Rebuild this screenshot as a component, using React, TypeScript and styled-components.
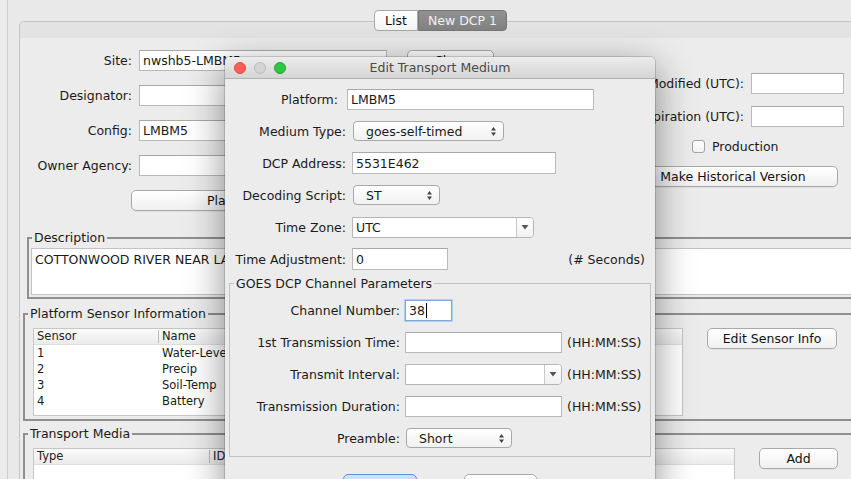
import React from 'react';
import styled, { createGlobalStyle } from 'styled-components';

const Global = createGlobalStyle`
  html, body { margin: 0; padding: 0; }
  body {
    background: #ececec;
    font-family: "DejaVu Sans", "Liberation Sans", sans-serif;
    font-size: 12.5px;
    color: #1a1a1a;
    overflow: hidden;
  }
  * { box-sizing: border-box; }
`;

const Screen = styled.div`
  position: relative;
  width: 851px;
  height: 479px;
  overflow: hidden;
  background: #ebebeb;
`;

const Frame = styled.div`
  margin-left: 7px;
  border-left: 1px solid #cdcdcd;
  height: 100%;
  padding: 10px 0 0 11px;
  background: #e9e9e9;
`;

const TabRow = styled.div`
  position: relative;
  z-index: 1;
  display: flex;
  height: 21px;
  margin-bottom: -10px;
  padding-left: 355px;
`;

const Tab = styled.div<{ $active?: boolean; $w: number }>`
  width: ${p => p.$w}px;
  height: 21px;
  display: flex;
  align-items: center;
  justify-content: center;
  border: 1px solid ${p => (p.$active ? '#777' : '#a8a8a8')};
  border-radius: ${p => (p.$active ? '0 4px 4px 0' : '4px 0 0 4px')};
  background: ${p => (p.$active ? 'linear-gradient(#919191, #828282)' : 'linear-gradient(#ffffff, #f4f4f4)')};
  color: ${p => (p.$active ? '#f2f2f2' : '#111')};
`;

const Pane = styled.div`
  width: 900px;
  height: 500px;
  border: 1px solid #c4c4c4;
  border-right: none;
  border-radius: 5px 0 0 0;
  overflow: hidden;
`;

const PaneHead = styled.div`
  height: 16px;
  background: #e3e3e3;
`;

const PaneBody = styled.div`
  background: #ececec;
  height: 100%;
  padding-top: 11px;
`;

const Upper = styled.div`
  display: flex;
`;

const LeftCol = styled.div`
  width: 524px;
  display: flex;
  flex-direction: column;
  gap: 13px;
`;

const RightCol = styled.div`
  width: 300px;
  padding-top: 23px;
  display: flex;
  flex-direction: column;
  align-items: flex-end;
`;

const Row = styled.div<{ $h?: number }>`
  display: flex;
  align-items: center;
  height: ${p => p.$h ?? 22}px;
  flex: none;
`;

const Label = styled.span<{ $w?: number; $gap?: number }>`
  flex: none;
  ${p => (p.$w ? `width: ${p.$w}px;` : '')}
  margin-right: ${p => p.$gap ?? 7}px;
  text-align: right;
  white-space: nowrap;
`;

const Field = styled.div<{ $w: number; $h?: number; $focus?: boolean }>`
  flex: none;
  width: ${p => p.$w}px;
  height: ${p => p.$h ?? 21}px;
  background: #fff;
  border: 1px solid ${p => (p.$focus ? '#7fa9dd' : '#b9b9b9')};
  border-top-color: ${p => (p.$focus ? '#7fa9dd' : '#a9a9a9')};
  box-shadow: ${p => (p.$focus ? '0 0 0 1px rgba(120,170,230,0.45)' : 'none')};
  padding: 0 3px;
  display: flex;
  align-items: center;
  white-space: nowrap;
  overflow: hidden;
`;

const Caret = styled.span`
  display: inline-block;
  width: 1px;
  height: 15px;
  background: #000;
  margin-left: 1px;
`;

const PushButton = styled.div<{ $w: number; $ml?: number; $mt?: number }>`
  flex: none;
  width: ${p => p.$w}px;
  height: 21px;
  margin-left: ${p => p.$ml ?? 0}px;
  margin-top: ${p => p.$mt ?? 0}px;
  border: 1px solid #a9a9a9;
  border-radius: 5px;
  background: linear-gradient(#ffffff, #f0f0f0);
  box-shadow: 0 1px 0 rgba(0, 0, 0, 0.04);
  display: flex;
  align-items: center;
  justify-content: center;
  white-space: nowrap;
  overflow: hidden;
  color: #111;
`;

const DefaultButton = styled(PushButton)`
  border-color: #5b8fd8;
  background: linear-gradient(#cfe3fb, #a9ccf7);
`;

const CheckRow = styled.div`
  align-self: flex-start;
  margin-left: 148px;
  margin-top: 12px;
  height: 14px;
  display: flex;
  align-items: center;
  gap: 7px;
`;

const CheckBox = styled.span`
  width: 13px;
  height: 13px;
  border: 1px solid #a3a3a3;
  border-radius: 3px;
  background: linear-gradient(#ffffff, #f3f3f3);
`;

const Group = styled.div<{ $ml: number; $mt: number; $pb: number }>`
  width: 880px;
  margin-left: ${p => p.$ml}px;
  margin-top: ${p => p.$mt}px;
  padding-bottom: ${p => p.$pb}px;
  border: 2px solid #8f8f8f;
  border-right: none;
`;

const Legend = styled.div<{ $ml: number }>`
  width: fit-content;
  height: 15px;
  line-height: 15px;
  margin: -9px 0 0 ${p => p.$ml}px;
  padding: 0 2px;
  background: #ececec;
  white-space: nowrap;
`;

const TextArea = styled.div`
  margin: 3px 0 0 2px;
  height: 47px;
  background: #fff;
  border: 1px solid #c3c3c3;
  padding: 3px 3px;
  line-height: 15px;
  white-space: nowrap;
`;

const GroupInner = styled.div`
  display: flex;
  align-items: flex-start;
  margin-top: 7px;
`;

const Table = styled.div<{ $w: number; $h: number }>`
  flex: none;
  margin-left: 8px;
  width: ${p => p.$w}px;
  height: ${p => p.$h}px;
  background: #fff;
  border: 1px solid #c6c6c6;
  font-size: 11.5px;
  overflow: hidden;
`;

const THead = styled.div<{ $cols: string }>`
  display: grid;
  grid-template-columns: ${p => p.$cols};
  height: 16px;
  background: linear-gradient(#fbfbfb, #ebebeb);
  border-bottom: 1px solid #dedede;
`;

const TH = styled.div<{ $sep?: boolean }>`
  padding-left: 3px;
  border-right: ${p => (p.$sep ? '1px solid #bcbcbc' : 'none')};
  margin: ${p => (p.$sep ? '1px 0' : '0')};
  line-height: ${p => (p.$sep ? '13px' : '15px')};
  color: #222;
`;

const TRow = styled.div<{ $cols: string }>`
  display: grid;
  grid-template-columns: ${p => p.$cols};
  height: 16px;
  line-height: 16px;
`;

const TD = styled.div`
  padding-left: 3px;
  white-space: nowrap;
  overflow: hidden;
`;

/* ---------- dialog ---------- */

const Dialog = styled.div`
  position: absolute;
  left: 225px;
  top: 57px;
  width: 430px;
  height: 450px;
  background: #ececec;
  border-radius: 5px 5px 0 0;
  box-shadow: 0 10px 38px rgba(0, 0, 0, 0.45), 0 0 0 1px rgba(0, 0, 0, 0.14);
  z-index: 5;
`;

const TitleBar = styled.div`
  height: 22px;
  display: grid;
  grid-template-columns: 1fr auto 1fr;
  align-items: center;
  border-radius: 5px 5px 0 0;
  background: linear-gradient(#ececec, #d5d5d5);
  border-bottom: 1px solid #b1b1b1;
`;

const Lights = styled.div`
  display: flex;
  gap: 8px;
  padding-left: 9px;
`;

const Light = styled.span<{ $c: string; $b: string }>`
  width: 12px;
  height: 12px;
  border-radius: 50%;
  background: ${p => p.$c};
  border: 1px solid ${p => p.$b};
`;

const Title = styled.div`
  color: #4a4a4a;
  white-space: nowrap;
`;

const DialogBody = styled.div`
  padding-top: 9px;
  display: flex;
  flex-direction: column;
`;

const Rows = styled.div`
  display: flex;
  flex-direction: column;
  gap: 10px;
`;

const Note = styled.span<{ $ml?: number; $mr?: number }>`
  margin-left: ${p => p.$ml ?? 5}px;
  margin-right: ${p => p.$mr ?? 0}px;
  white-space: nowrap;
`;

const Spacer = styled.span`
  flex: 1;
`;

const InnerGroup = styled.div`
  margin: 13px 4px 0 4px;
  border: 1px solid #c2c2c2;
  padding-bottom: 7px;
`;

const InnerLegend = styled.div`
  width: fit-content;
  height: 15px;
  line-height: 15px;
  margin: -8px 0 0 4px;
  padding: 0 2px;
  background: #ececec;
  white-space: nowrap;
`;

const InnerRows = styled(Rows)`
  padding-top: 8px;
`;

const Popup = styled.div<{ $w: number; $ml?: number }>`
  flex: none;
  width: ${p => p.$w}px;
  height: 20px;
  margin-left: ${p => p.$ml ?? 0}px;
  border: 1px solid #a9a9a9;
  border-radius: 4px;
  background: linear-gradient(#ffffff, #f1f1f1);
  display: flex;
  align-items: center;
  padding: 0 6px 0 12px;
  white-space: nowrap;
`;

const Combo = styled.div<{ $w: number }>`
  flex: none;
  width: ${p => p.$w}px;
  height: 21px;
  display: flex;
  border: 1px solid #b6b6b6;
  border-radius: 0 4px 4px 0;
  background: #fff;
  overflow: hidden;
`;

const ComboText = styled.div`
  flex: 1;
  padding-left: 3px;
  display: flex;
  align-items: center;
`;

const ComboArrow = styled.div`
  width: 17px;
  border-left: 1px solid #c8c8c8;
  background: linear-gradient(#ffffff, #f1f1f1);
  display: flex;
  align-items: center;
  justify-content: center;
`;

const ButtonRow = styled.div`
  display: flex;
  padding-left: 118px;
  gap: 47px;
  margin-top: 17px;
`;

const UpDown = () => (
  <svg width="7" height="11" viewBox="0 0 7 11" style={{ marginLeft: 'auto' }}>
    <polygon points="3.5,1 6,4.5 1,4.5" fill="#444" />
    <polygon points="1,6.5 6,6.5 3.5,10" fill="#444" />
  </svg>
);

const Down = () => (
  <svg width="8" height="6" viewBox="0 0 8 6">
    <polygon points="0.5,1 7.5,1 4,5.5" fill="#555" />
  </svg>
);

const sensorCols = '125px 1fr';
const mediaCols = '176px 1fr';

export default function App() {
  return (
    <Screen>
      <Global />
      <Frame>
        <TabRow>
          <Tab $w={44}>List</Tab>
          <Tab $w={89} $active>New DCP 1</Tab>
        </TabRow>
        <Pane>
          <PaneHead />
          <PaneBody>
            <Upper>
              <LeftCol>
                <Row>
                  <Label $w={112}>Site:</Label>
                  <Field $w={248}>nwshb5-LMBM5</Field>
                  <PushButton $w={87} $ml={20}>Clear</PushButton>
                </Row>
                <Row>
                  <Label $w={112}>Designator:</Label>
                  <Field $w={248} />
                </Row>
                <Row>
                  <Label $w={112}>Config:</Label>
                  <Field $w={248}>LMBM5</Field>
                </Row>
                <Row>
                  <Label $w={112}>Owner Agency:</Label>
                  <Field $w={248} />
                </Row>
                <Row>
                  <PushButton $w={252} $ml={111}>Platform Names</PushButton>
                </Row>
              </LeftCol>
              <RightCol>
                <Row>
                  <Label>Last Modified (UTC):</Label>
                  <Field $w={93} />
                </Row>
                <Row style={{ marginTop: 11 }}>
                  <Label>Expiration (UTC):</Label>
                  <Field $w={93} />
                </Row>
                <CheckRow>
                  <CheckBox />
                  <span>Production</span>
                </CheckRow>
                <PushButton $w={210} $mt={13} style={{ marginRight: 6 }}>
                  Make Historical Version
                </PushButton>
              </RightCol>
            </Upper>

            <Group $ml={7} $mt={26} $pb={2}>
              <Legend $ml={3}>Description</Legend>
              <TextArea>COTTONWOOD RIVER NEAR LAMBERTON MN</TextArea>
            </Group>

            <Group $ml={3} $mt={14} $pb={3}>
              <Legend $ml={3}>Platform Sensor Information</Legend>
              <GroupInner>
                <Table $w={650} $h={88}>
                  <THead $cols={sensorCols}>
                    <TH $sep>Sensor</TH>
                    <TH>Name</TH>
                  </THead>
                  {[
                    ['1', 'Water-Level'],
                    ['2', 'Precip'],
                    ['3', 'Soil-Temp'],
                    ['4', 'Battery'],
                  ].map(([n, name]) => (
                    <TRow key={n} $cols={sensorCols}>
                      <TD>{n}</TD>
                      <TD>{name}</TD>
                    </TRow>
                  ))}
                </Table>
                <PushButton $w={130} $ml={24} $mt={0}>Edit Sensor Info</PushButton>
              </GroupInner>
            </Group>

            <Group $ml={3} $mt={12} $pb={3}>
              <Legend $ml={3}>Transport Media</Legend>
              <GroupInner>
                <Table $w={702} $h={80}>
                  <THead $cols={mediaCols}>
                    <TH $sep>Type</TH>
                    <TH>ID</TH>
                  </THead>
                </Table>
                <PushButton $w={79} $ml={24} $mt={0}>Add</PushButton>
              </GroupInner>
            </Group>
          </PaneBody>
        </Pane>
      </Frame>

      <Dialog>
        <TitleBar>
          <Lights>
            <Light $c="#fc5f57" $b="#df4a43" />
            <Light $c="#d3d3d3" $b="#bdbdbd" />
            <Light $c="#2dc640" $b="#1fa92f" />
          </Lights>
          <Title>Edit Transport Medium</Title>
          <span />
        </TitleBar>
        <DialogBody>
          <Rows>
            <Row>
              <Label $w={113} $gap={9}>Platform:</Label>
              <Field $w={247}>LMBM5</Field>
            </Row>
            <Row>
              <Label $w={121} $gap={6}>Medium Type:</Label>
              <Popup $w={151} $ml={1}>
                goes-self-timed
                <UpDown />
              </Popup>
            </Row>
            <Row>
              <Label $w={121} $gap={6}>DCP Address:</Label>
              <Field $w={204} $h={22}>5531E462</Field>
            </Row>
            <Row>
              <Label $w={121} $gap={6}>Decoding Script:</Label>
              <Popup $w={87} $ml={1}>
                ST
                <UpDown />
              </Popup>
            </Row>
            <Row>
              <Label $w={121} $gap={6}>Time Zone:</Label>
              <Combo $w={182}>
                <ComboText>UTC</ComboText>
                <ComboArrow>
                  <Down />
                </ComboArrow>
              </Combo>
            </Row>
            <Row>
              <Label $w={121} $gap={6}>Time Adjustment:</Label>
              <Field $w={96} $h={22}>0</Field>
              <Spacer />
              <Note $mr={10}>(# Seconds)</Note>
            </Row>
          </Rows>

          <InnerGroup>
            <InnerLegend>GOES DCP Channel Parameters</InnerLegend>
            <InnerRows>
              <Row>
                <Label $w={170} $gap={5}>Channel Number:</Label>
                <Field $w={47} $focus>
                  38
                  <Caret />
                </Field>
              </Row>
              <Row>
                <Label $w={170} $gap={5}>1st Transmission Time:</Label>
                <Field $w={157}></Field>
                <Note>(HH:MM:SS)</Note>
              </Row>
              <Row>
                <Label $w={170} $gap={5}>Transmit Interval:</Label>
                <Combo $w={157}>
                  <ComboText />
                  <ComboArrow>
                    <Down />
                  </ComboArrow>
                </Combo>
                <Note>(HH:MM:SS)</Note>
              </Row>
              <Row>
                <Label $w={170} $gap={5}>Transmission Duration:</Label>
                <Field $w={157}></Field>
                <Note>(HH:MM:SS)</Note>
              </Row>
              <Row>
                <Label $w={170} $gap={5}>Preamble:</Label>
                <Popup $w={106} $ml={1}>
                  Short
                  <UpDown />
                </Popup>
              </Row>
            </InnerRows>
          </InnerGroup>

          <ButtonRow>
            <DefaultButton $w={74}>OK</DefaultButton>
            <PushButton $w={73}>Cancel</PushButton>
          </ButtonRow>
        </DialogBody>
      </Dialog>
    </Screen>
  );
}
